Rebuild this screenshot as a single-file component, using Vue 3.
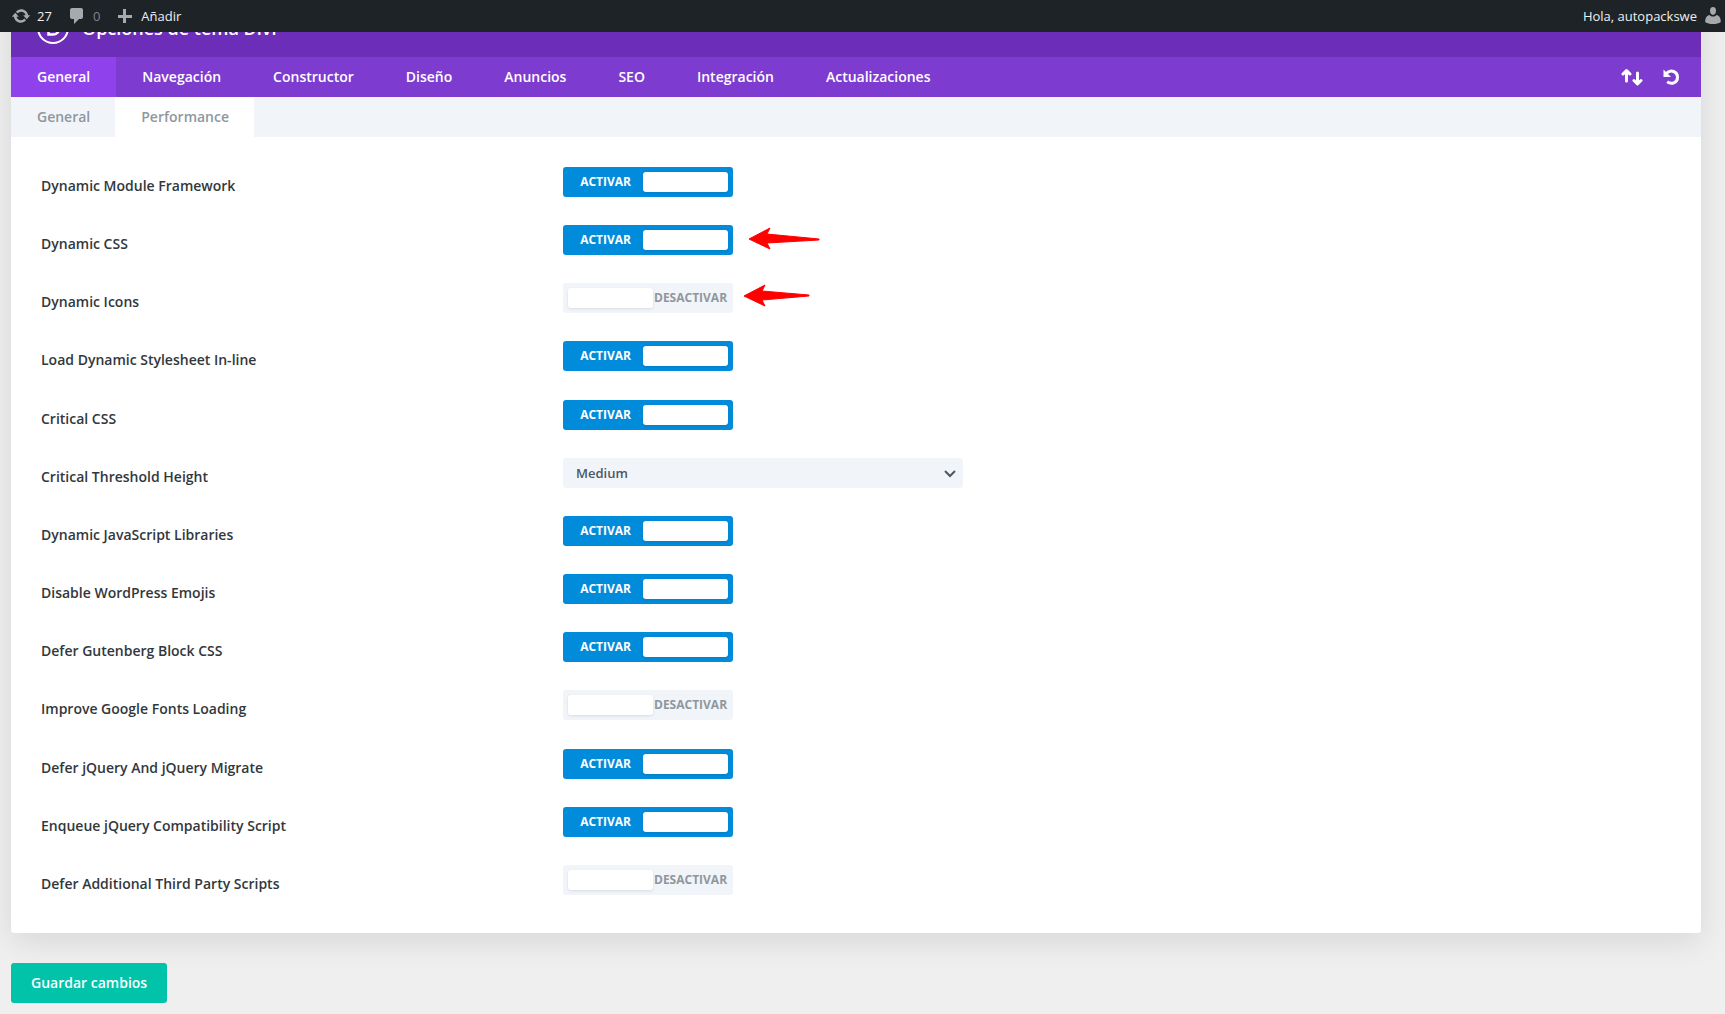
<script setup>
import { ref } from 'vue'

const tabs = ['General', 'Navegación', 'Constructor', 'Diseño', 'Anuncios', 'SEO', 'Integración', 'Actualizaciones']
const subtabs = ['General', 'Performance']

const options = ref([
  { id: 'module-framework', label: 'Dynamic Module Framework', on: true },
  { id: 'dynamic-css', label: 'Dynamic CSS', on: true, arrow: '16,14 37,3 34,9 86,14 86,15 34,18 37,24' },
  { id: 'dynamic-icons', label: 'Dynamic Icons', on: false, arrow: '11,13 32,2 29,8 76,12 76,13 29,17 32,23' },
  { id: 'stylesheet-inline', label: 'Load Dynamic Stylesheet In-line', on: true },
  { id: 'critical-css', label: 'Critical CSS', on: true },
  { id: 'threshold', label: 'Critical Threshold Height', choices: ['Low', 'Medium', 'High'], value: 'Medium' },
  { id: 'js-libraries', label: 'Dynamic JavaScript Libraries', on: true },
  { id: 'emojis', label: 'Disable WordPress Emojis', on: true },
  { id: 'gutenberg-css', label: 'Defer Gutenberg Block CSS', on: true },
  { id: 'google-fonts', label: 'Improve Google Fonts Loading', on: false },
  { id: 'jquery-migrate', label: 'Defer jQuery And jQuery Migrate', on: true },
  { id: 'jquery-compat', label: 'Enqueue jQuery Compatibility Script', on: true },
  { id: 'third-party', label: 'Defer Additional Third Party Scripts', on: false },
])
</script>

<template>
  <header class="adminbar">
    <a href="#" class="bar-item">
      <svg width="20" height="20" viewBox="0 0 20 20" fill="#a7aaad"><path d="M10.200 3.280c3.530 0 6.430 2.610 6.920 6h2.080l-3.500 4-3.500-4h2.320c-.450-1.970-2.210-3.450-4.320-3.450-1.450 0-2.730.710-3.540 1.780L4.950 5.660C6.230 4.200 8.110 3.280 10.200 3.280zM9.800 16.720c-3.520 0-6.430-2.610-6.920-6H.800l3.500-4c1.170 1.330 2.330 2.670 3.500 4H5.480c.450 1.970 2.210 3.450 4.320 3.450 1.450 0 2.730-.710 3.540-1.780l1.710 1.950c-1.280 1.460-3.150 2.380-5.250 2.380z" /></svg>
      <span>27</span>
    </a>
    <a href="#" class="bar-item muted">
      <svg width="20" height="20" viewBox="0 0 20 20" fill="#a7aaad"><path d="M5 2h9q2 0 2 2v7q0 2-2 2h-2l-5 5v-5H5q-2 0-2-2V4q0-2 2-2z" /></svg>
      <span>0</span>
    </a>
    <a href="#" class="bar-item">
      <svg width="20" height="20" viewBox="0 0 20 20" fill="#a7aaad"><path d="M8 3h3v6h6v3h-6v5H8v-5H3V9h5z" /></svg>
      <span>Añadir</span>
    </a>
    <a href="#" class="bar-item account">
      <span>Hola, autopackswe</span>
      <svg width="16" height="18" viewBox="0 0 16 18" fill="#a7aaad"><path d="M8 0c2 0 3 1.500 3 3.800S9.700 8 8 8 5 6.100 5 3.800 6 0 8 0zM4.500 8C5.500 9 6.500 9.500 8 9.500S10.500 9 11.500 8c2.500.5 4.300 2.500 4.300 7-2 1.500-4.500 2-7.800 2s-5.800-.5-7.800-2c0-4.500 1.800-6.500 4.300-7z" /></svg>
    </a>
  </header>

  <main class="page">
    <section class="panel">
      <div class="title">
        <svg width="32" height="32" viewBox="0 0 32 32" fill="none" stroke="#fff"><circle cx="16" cy="16" r="15" stroke-width="2" /><path d="M11.500 9.500h4.500a6.500 6.500 0 0 1 0 13h-4.500z" stroke-width="2.500" /></svg>
        <h1>Opciones de tema Divi</h1>
      </div>

      <nav class="tabs">
        <a v-for="(tab, i) in tabs" :key="tab" href="#" :class="{ active: i === 0 }">{{ tab }}</a>
        <div class="actions">
          <button type="button" aria-label="Portabilidad">
            <svg width="22" height="18" viewBox="0 0 22 18" fill="none" stroke="#fff" stroke-width="3" stroke-linejoin="round" stroke-linecap="round"><path d="M5.500 13V3M2 6l3.500-3.500L9 6M16.500 5v10M13 12.500l3.500 3.500 3.500-3.500" /></svg>
          </button>
          <button type="button" aria-label="Restablecer">
            <svg width="16" height="18" viewBox="0 0 16 18"><path d="M3.500 5.300C8 .5 14.500 4 14.500 9.200c0 5.500-6 7.800-10.300 4.600" fill="none" stroke="#fff" stroke-width="3" /><path d="M.5 1.500L8 9H.5z" fill="#fff" /></svg>
          </button>
        </div>
      </nav>

      <nav class="subtabs">
        <a v-for="(tab, i) in subtabs" :key="tab" href="#" :class="{ active: i === 1 }">{{ tab }}</a>
      </nav>

      <div class="options">
        <div v-for="option in options" :key="option.id" class="option">
          <label :for="option.id">{{ option.label }}</label>
          <div v-if="option.choices" class="select">
            <select :id="option.id" v-model="option.value">
              <option v-for="choice in option.choices" :key="choice">{{ choice }}</option>
            </select>
            <svg width="12" height="8" viewBox="0 0 12 8" fill="none" stroke="#50575e" stroke-width="2"><path d="M1 1l5 5 5-5" /></svg>
          </div>
          <div v-else class="toggle" :class="{ on: option.on }">
            <input :id="option.id" v-model="option.on" type="checkbox" role="switch">
            <span class="state">{{ option.on ? 'ACTIVAR' : 'DESACTIVAR' }}</span>
            <span class="knob"></span>
          </div>
          <svg v-if="option.arrow" width="90" height="28" viewBox="0 0 90 28" fill="#f00" stroke="#f00" stroke-linejoin="round"><polygon :points="option.arrow" /></svg>
        </div>
      </div>
    </section>

    <button type="button" class="save">Guardar cambios</button>
  </main>
</template>

<style>
body {
  margin: 0;
  background: #efefef;
}
</style>

<style scoped>
.adminbar {
  position: fixed;
  inset: 0 0 auto;
  z-index: 2;
  display: flex;
  gap: 15px;
  box-sizing: border-box;
  height: 32px;
  padding: 0 4px 0 11px;
  background: #1d2327;
  font: 13px/32px "Open Sans", sans-serif;
}

.bar-item {
  display: flex;
  align-items: center;
  gap: 6px;
  color: #f0f0f1;
  text-decoration: none;
}

.muted span {
  color: #7f8387;
}

.account {
  gap: 8px;
  margin-left: auto;
}

.page {
  padding: 0 24px 11px 11px;
  font: 600 14px/20px "Open Sans", sans-serif;
}

.panel {
  overflow: hidden;
  border-radius: 3px;
  background: #fff;
  box-shadow: 0 8px 32px rgba(0, 0, 0, .1);
}

.title {
  display: flex;
  align-items: center;
  gap: 13px;
  box-sizing: border-box;
  height: 57px;
  padding: 0 26px 2px;
  background: #6c2eb9;
}

h1 {
  margin: 0;
  color: #fff;
  font-size: 18px;
  font-weight: 600;
}

.tabs,
.subtabs {
  display: flex;
  line-height: 40px;
}

.tabs {
  background: #7e3bd0;
}

.subtabs {
  background: #f1f5f9;
}

.tabs a {
  padding: 0 26px;
  color: #fff;
  text-decoration: none;
}

.subtabs a {
  padding: 0 25px 0 26px;
  color: #8f979e;
  text-decoration: none;
}

.tabs .active {
  background: #8f42ec;
}

.subtabs .active {
  background: #fff;
}

.actions {
  display: flex;
  align-items: center;
  gap: 20px;
  margin-left: auto;
  padding-right: 22px;
}

.actions button {
  display: flex;
  padding: 0;
  border: 0;
  background: none;
}

.options {
  display: flex;
  flex-direction: column;
  justify-content: space-between;
  min-height: 728px;
  padding: 30px 30px 38px;
}

.option {
  display: flex;
  height: 30px;
}

.option label {
  width: 522px;
  padding-top: 9px;
  color: #32373c;
}

.toggle {
  position: relative;
  display: flex;
  align-items: center;
  flex-direction: row-reverse;
  justify-content: flex-end;
  gap: 1px;
  box-sizing: border-box;
  width: 170px;
  padding: 0 5px;
  border-radius: 3px;
  background: #f1f5f9;
  color: #8f979e;
  font-size: 12px;
  font-weight: 700;
}

.toggle.on {
  flex-direction: row;
  gap: 12px;
  background: #008bdb;
  color: #fff;
}

.toggle input {
  position: absolute;
  inset: 0;
  width: 100%;
  height: 100%;
  margin: 0;
  opacity: 0;
}

.knob {
  width: 85px;
  height: 20px;
  border-radius: 3px;
  background: #fff;
  box-shadow: 0 1px 3px rgba(0, 0, 0, .1);
}

.select {
  position: relative;
  width: 400px;
}

.select select {
  width: 100%;
  height: 30px;
  padding: 0 13px;
  border: 0;
  border-radius: 3px;
  appearance: none;
  background: #f1f5f9;
  color: #4c5866;
  font: 600 13px/30px "Open Sans", sans-serif;
}

.select svg {
  position: absolute;
  top: 12px;
  right: 7px;
  pointer-events: none;
}

.save {
  display: block;
  height: 40px;
  margin-top: 30px;
  padding: 0 20px;
  border: 0;
  border-radius: 3px;
  background: #00c3aa;
  color: #fff;
  font: 600 14px/40px "Open Sans", sans-serif;
}
</style>
